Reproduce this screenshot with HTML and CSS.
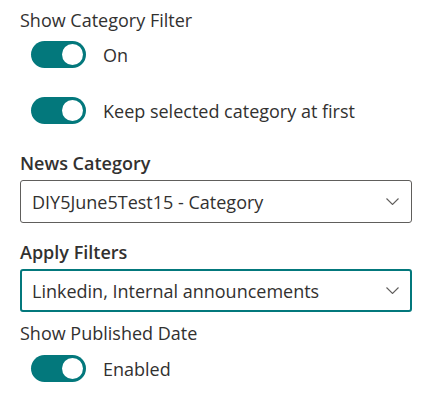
FILE: index.html
```html
<!DOCTYPE html>
<html>
<head>
<meta charset="utf-8">
<link rel="stylesheet" href="styles.css">
</head>
<body>
<div class="panel">
  <div class="label first">Show Category Filter</div>
  <div class="toggle-row">
    <span class="toggle"><span class="knob"></span></span>
    <span class="toggle-text">On</span>
  </div>
  <div class="toggle-row second">
    <span class="toggle"><span class="knob"></span></span>
    <span class="toggle-text">Keep selected category at first</span>
  </div>
  <div class="label bold news">News Category</div>
  <div class="dropdown">
    <span class="dd-text">DIY5June5Test15 - Category</span>
    <svg class="chev" width="13" height="7" viewBox="0 0 13 7"><path d="M0.5 0.5 L6.5 6.5 L12.5 0.5" fill="none" stroke="#605e5c" stroke-width="1.1"/></svg>
  </div>
  <div class="label bold apply">Apply Filters</div>
  <div class="dropdown focused">
    <span class="dd-text">Linkedin, Internal announcements</span>
    <svg class="chev" width="13" height="7" viewBox="0 0 13 7"><path d="M0.5 0.5 L6.5 6.5 L12.5 0.5" fill="none" stroke="#605e5c" stroke-width="1.1"/></svg>
  </div>
  <div class="label published">Show Published Date</div>
  <div class="toggle-row third">
    <span class="toggle"><span class="knob"></span></span>
    <span class="toggle-text">Enabled</span>
  </div>
</div>
</body>
</html>
```
FILE: styles.css
```css
html, body {
  margin: 0;
  padding: 0;
  background: #ffffff;
}
body {
  font-family: "Open Sans", "Noto Sans", sans-serif;
  color: #323130;
  font-size: 18px;
}
.panel {
  padding: 8px 25px 0 20px;
  display: flex;
  flex-direction: column;
}
.label {
  font-size: 18px;
  line-height: 24px;
  height: 24px;
}
.label.bold {
  font-weight: 600;
}
.label.news {
  margin-top: 27px;
  margin-bottom: 5px;
}
.label.apply {
  margin-top: 17px;
  margin-bottom: 5px;
}
.label.published {
  margin-top: 9px;
}
.toggle-row {
  display: flex;
  align-items: center;
  gap: 17px;
  padding-left: 11px;
  margin-top: 9px;
  height: 27px;
}
.toggle-row.second {
  margin-top: 29px;
}
.toggle-row.third {
  margin-top: 10px;
}
.toggle {
  width: 55px;
  height: 27px;
  border-radius: 14px;
  background: #03787c;
  display: flex;
  align-items: center;
  justify-content: flex-end;
  padding-right: 3px;
  box-sizing: border-box;
  flex: none;
}
.knob {
  width: 21px;
  height: 21px;
  border-radius: 50%;
  background: #ffffff;
}
.toggle-text {
  font-size: 18px;
  line-height: 24px;
}
.dropdown {
  height: 43px;
  box-sizing: border-box;
  border: 1px solid #605e5c;
  border-radius: 3px;
  display: flex;
  align-items: center;
  justify-content: space-between;
  padding: 0 12px 0 11px;
}
.dropdown.focused {
  border: 2px solid #03787c;
  padding-left: 10px;
  padding-right: 11px;
}
.dd-text {
  font-size: 18px;
  line-height: 24px;
}
.chev {
  display: block;
}
```
